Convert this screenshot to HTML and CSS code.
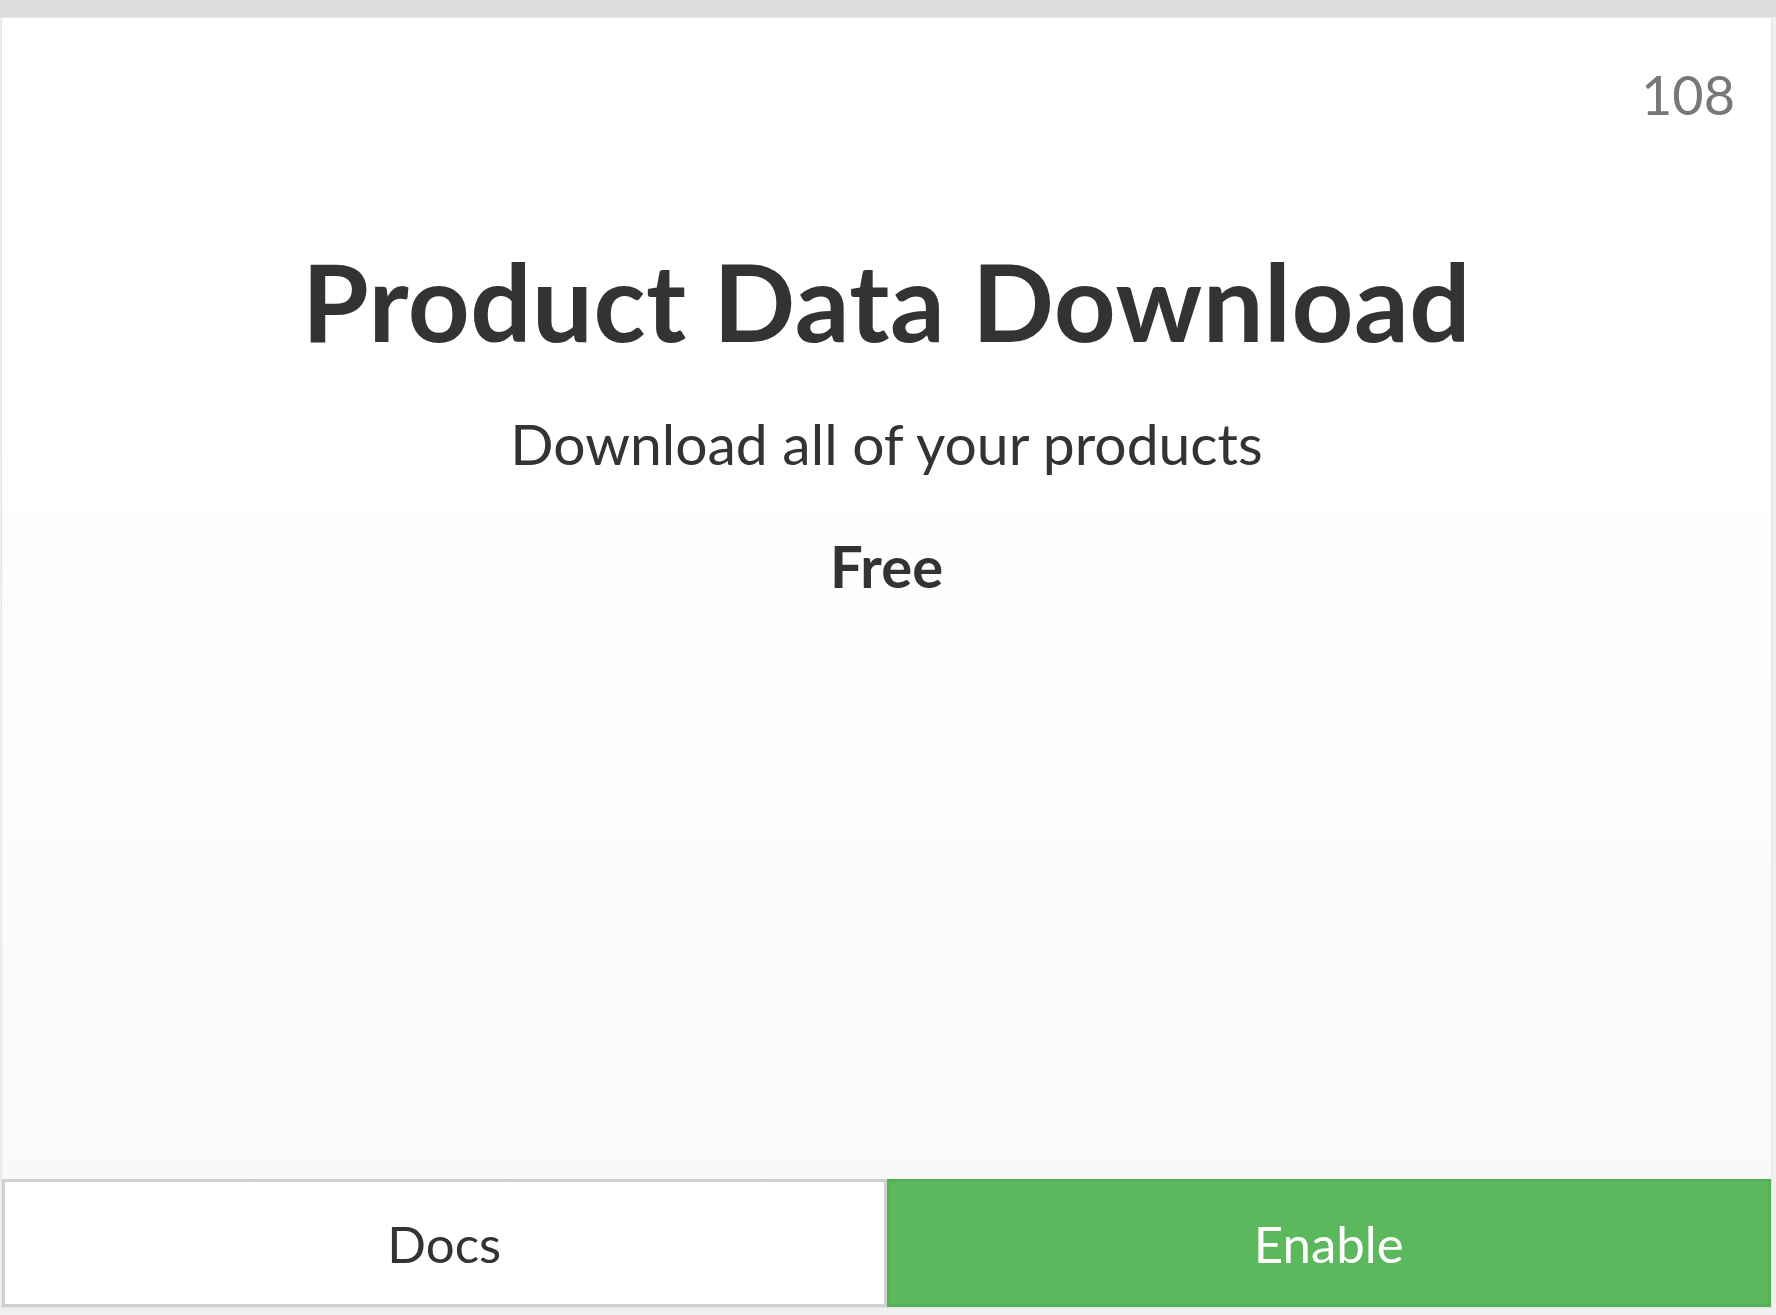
FILE: index.html
```html
<!DOCTYPE html>
<html lang="en">
<head>
<meta charset="utf-8">
<title>Product Data Download</title>
<link rel="stylesheet" href="styles.css">
</head>
<body>
  <div class="card">
    <div class="card-top">
      <span class="card-id">108</span>
    </div>
    <div class="card-body">
      <h1 class="card-title">Product Data Download</h1>
      <p class="card-desc">Download all of your products</p>
      <p class="card-price">Free</p>
    </div>
    <div class="card-actions">
      <a class="btn btn-docs" href="#">Docs</a>
      <a class="btn btn-enable" href="#">Enable</a>
    </div>
  </div>
</body>
</html>
```
FILE: styles.css
```css
html, body {
  margin: 0;
  padding: 0;
}
body {
  width: 1776px;
  height: 1315px;
  overflow: hidden;
  background: linear-gradient(#dcdcdc 0, #dcdcdc 17px, #f0f0f0 17px, #f0f0f0 100%);
  font-family: "Lato", "Open Sans", sans-serif;
  color: #333;
}
.card {
  box-sizing: border-box;
  margin: 17px 4px 0 1px;
  height: 1291px;
  border: 1px solid #e4e4e4;
  background: linear-gradient(#ffffff 0%, #ffffff 30%, #f8f8f8 100%);
  display: flex;
  flex-direction: column;
}
.card-top {
  display: flex;
  justify-content: flex-end;
  padding: 45px 36px 0 0;
}
.card-id {
  font-size: 54px;
  line-height: 1.2;
  color: #777;
}
.card-body {
  display: flex;
  flex-direction: column;
  align-items: center;
  padding-top: 108px;
}
.card-title {
  margin: 0;
  font-size: 108px;
  line-height: 1.2;
  font-weight: 700;
  letter-spacing: 0.5px;
  color: #333;
}
.card-desc {
  margin: 44px 0 0;
  font-size: 57px;
  line-height: 1.2;
  color: #333;
}
.card-price {
  margin: 53px 0 0;
  font-size: 58px;
  line-height: 1.2;
  font-weight: 700;
  color: #333;
}
.card-actions {
  margin-top: auto;
  display: flex;
}
.btn {
  box-sizing: border-box;
  flex: 1 1 0;
  height: 128px;
  display: flex;
  align-items: center;
  justify-content: center;
  font-size: 51px;
  text-decoration: none;
}
.btn-docs {
  background: #fff;
  color: #333;
  border: 3px solid #d0d0d0;
}
.btn-enable {
  background: #5cb85c;
  color: #fff;
  border: 3px solid #55b155;
}
```
